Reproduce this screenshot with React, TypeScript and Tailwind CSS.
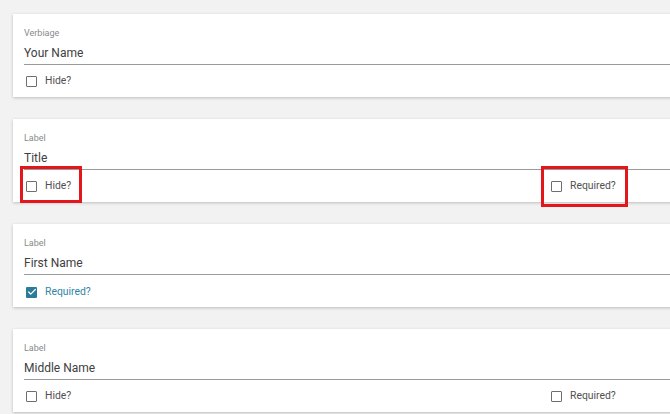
import { Check } from "lucide-react";

interface Field {
  label: string;
  value: string;
  hide?: boolean;
  required?: boolean;
  requiredChecked?: boolean;
  marked?: boolean;
}

const fields: Field[] = [
  { label: "Verbiage", value: "Your Name", hide: true },
  { label: "Label", value: "Title", hide: true, required: true, marked: true },
  { label: "Label", value: "First Name", required: true, requiredChecked: true },
  { label: "Label", value: "Middle Name", hide: true, required: true },
];

function Box({ checked, text }: { checked?: boolean; text: string }) {
  return (
    <div className="flex items-center gap-[8px] h-[12px]">
      {checked ? (
        <span className="w-[11px] h-[11px] rounded-[1px] bg-[#2c7b98] flex items-center justify-center">
          <Check size={10} strokeWidth={3} className="text-white" />
        </span>
      ) : (
        <span className="w-[11px] h-[11px] rounded-[1px] border-[1.5px] border-[#6e6e6e] bg-white" />
      )}
      <span className={`text-[10.4px] leading-[12px] ${checked ? "text-[#2f84a5]" : "text-[#505050]"}`}>
        {text}
      </span>
    </div>
  );
}

function FieldCard({ f }: { f: Field }) {
  return (
    <div className="relative bg-white w-[680px] h-[83px] pt-[14px] pl-[11px] shadow-[0_1px_3px_rgba(0,0,0,0.22)]">
      <div className="text-[9px] leading-[11px] text-[#8a8a8a]">{f.label}</div>
      <div className="mt-[6px] pb-[3px] text-[12px] leading-[16px] text-[#404040] border-b border-[#9a9a9a]">
        {f.value}
      </div>
      <div className="mt-[10px] ml-[2px] grid grid-cols-[525px_1fr]">
        <div>{f.hide && <Box text="Hide?" />}</div>
        <div>{f.required && !f.requiredChecked && <Box text="Required?" />}</div>
      </div>
      {f.requiredChecked && (
        <div className="absolute left-[13px] top-[62px]">
          <Box checked text="Required?" />
        </div>
      )}
      {f.marked && (
        <>
          <div className="absolute left-[7px] top-[47px] w-[62px] h-[37px] border-[3px] border-[#e3161b]" />
          <div className="absolute left-[528px] top-[47px] w-[87px] h-[41px] border-[3px] border-[#e3161b]" />
        </>
      )}
    </div>
  );
}

export default function App() {
  return (
    <div
      className="w-[670px] h-[414px] overflow-hidden bg-[#f2f2f2] pt-[14px] pl-[13px]"
      style={{ fontFamily: "Roboto, 'Liberation Sans', sans-serif" }}
    >
      <div className="flex flex-col gap-[22px]">
        {fields.map((f, i) => (
          <FieldCard key={i} f={f} />
        ))}
      </div>
    </div>
  );
}
